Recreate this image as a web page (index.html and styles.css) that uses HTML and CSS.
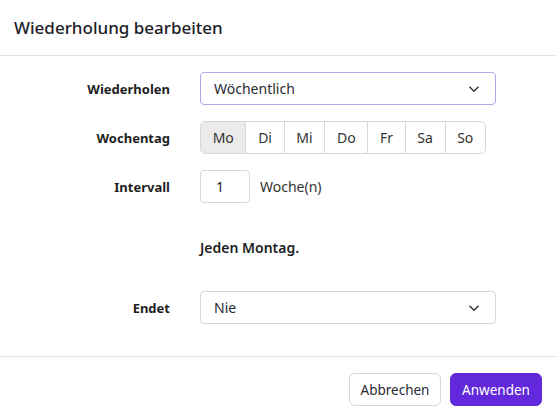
FILE: index.html
```html
<!DOCTYPE html>
<html lang="de">
<head>
<meta charset="utf-8">
<link rel="stylesheet" href="styles.css">
</head>
<body>
<div class="dialog">
  <header class="head"><h1 class="title">Wiederholung bearbeiten</h1></header>
  <div class="body">
    <div class="row">
      <label class="lbl">Wiederholen</label>
      <div class="select focus"><span>Wöchentlich</span>
        <svg class="chev" width="12" height="8" viewBox="0 0 12 8"><path d="M1.5 1.8 6 6.2 10.5 1.8" fill="none" stroke="#333" stroke-width="1.4"/></svg>
      </div>
    </div>
    <div class="row">
      <label class="lbl">Wochentag</label>
      <div class="days">
        <span class="day on">Mo</span><span class="day">Di</span><span class="day">Mi</span><span class="day">Do</span><span class="day">Fr</span><span class="day">Sa</span><span class="day">So</span>
      </div>
    </div>
    <div class="row">
      <label class="lbl">Intervall</label>
      <div class="interval"><span class="num">1</span><span class="unit">Woche(n)</span></div>
    </div>
    <div class="summary">Jeden Montag.</div>
    <div class="row">
      <label class="lbl">Endet</label>
      <div class="select"><span>Nie</span>
        <svg class="chev" width="12" height="8" viewBox="0 0 12 8"><path d="M1.5 1.8 6 6.2 10.5 1.8" fill="none" stroke="#333" stroke-width="1.4"/></svg>
      </div>
    </div>
  </div>
  <footer class="foot">
    <button class="btn ghost">Abbrechen</button>
    <button class="btn primary">Anwenden</button>
  </footer>
</div>
</body>
</html>
```
FILE: styles.css
```css
* { box-sizing: border-box; }
html, body { margin: 0; padding: 0; background: #fff; }
body { font-family: "Noto Sans", "Open Sans", sans-serif; color: #222; font-size: 14px; }
.dialog { width: 556px; height: 420px; display: flex; flex-direction: column; }
.head { height: 56px; border-bottom: 1px solid #e3e3e6; display: flex; align-items: center; padding: 0 14px; }
.title { margin: 0; font-size: 17px; font-weight: 500; color: #1d1d28; }
.body { padding: 16px 0 0; display: flex; flex-direction: column; gap: 16px; height: 300px; }
.row { display: grid; grid-template-columns: 170px 1fr; column-gap: 30px; align-items: center; }
.lbl { text-align: right; font-weight: 700; font-size: 13px; color: #1e1e1e; }
.select { width: 296px; height: 33px; border: 1px solid #d3d6dc; border-radius: 4px; display: flex; align-items: center; justify-content: space-between; padding: 0 15px 0 13px; color: #2a2a33; }
.select.focus { border-color: #b4a6e6; }
.days { display: flex; width: 286px; height: 33px; border: 1px solid #d3d6dc; border-radius: 5px; overflow: hidden; }
.day { flex: 1 1 auto; display: flex; align-items: center; justify-content: center; border-left: 1px solid #d6d9de; color: #333; padding: 0 10px; }
.day:first-child { border-left: 0; }
.day.on { background: #ebebeb; }
.interval { display: flex; align-items: center; gap: 10px; }
.num { width: 50px; height: 33px; border: 1px solid #d3d6dc; border-radius: 4px; display: flex; align-items: center; padding-left: 15px; }
.unit { color: #333; }
.summary { margin: 13px 0 13px 200px; height: 30px; display: flex; align-items: center; font-weight: 600; font-size: 14px; color: #222; }
.foot { border-top: 1px solid #e3e3e6; margin-top: auto; height: 64px; display: flex; justify-content: flex-end; align-items: flex-start; padding: 16px 14px 0; gap: 9px; }
.btn { height: 33px; padding: 0 10px; border-radius: 6px; font-family: inherit; font-size: 13.5px; cursor: pointer; }
.ghost { background: #fff; border: 1px solid #d3d6dc; color: #2a2a33; width: 92px; }
.primary { background: #6128dc; border: 1px solid #6128dc; color: #fff; width: 92px; }
```
